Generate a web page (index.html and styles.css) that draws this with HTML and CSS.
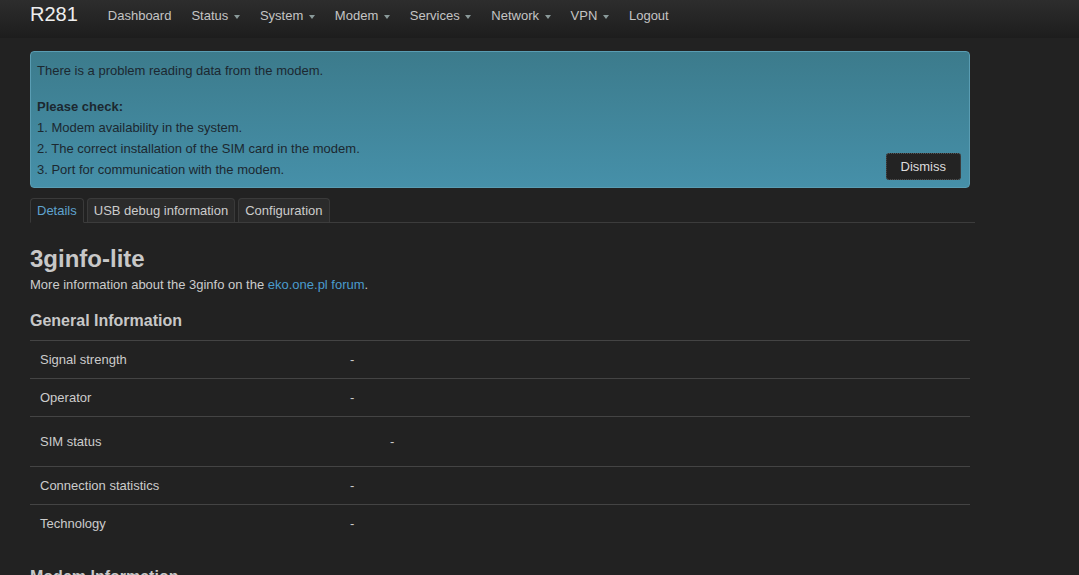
FILE: index.html
```html
<!DOCTYPE html>
<html lang="en">
<head>
    <meta charset="UTF-8">
    <title>R281 - 3ginfo-lite</title>
    <link rel="stylesheet" href="styles.css">
</head>
<body>
    <header class="navbar">
        <a class="brand" href="#">R281</a>
        <ul class="nav">
            <li><a href="#">Dashboard</a></li>
            <li><a href="#">Status <span class="caret"></span></a></li>
            <li><a href="#">System <span class="caret"></span></a></li>
            <li><a href="#">Modem <span class="caret"></span></a></li>
            <li><a href="#">Services <span class="caret"></span></a></li>
            <li><a href="#">Network <span class="caret"></span></a></li>
            <li><a href="#">VPN <span class="caret"></span></a></li>
            <li><a href="#">Logout</a></li>
        </ul>
    </header>

    <div class="container">
        <div class="alert">
            <div class="alert-text">
                <p class="alert-lead">There is a problem reading data from the modem.</p>
                <strong>Please check:</strong>
                <p>1. Modem availability in the system.</p>
                <p>2. The correct installation of the SIM card in the modem.</p>
                <p>3. Port for communication with the modem.</p>
            </div>
            <button class="btn">Dismiss</button>
        </div>

        <ul class="tabs">
            <li class="active"><a href="#">Details</a></li>
            <li><a href="#">USB debug information</a></li>
            <li><a href="#">Configuration</a></li>
        </ul>

        <h2>3ginfo-lite</h2>
        <p class="intro">More information about the 3ginfo on the <a href="#">eko.one.pl forum</a>.</p>

        <h3>General Information</h3>
        <table class="info-table">
            <tr><td class="label">Signal strength</td><td>-</td></tr>
            <tr><td class="label">Operator</td><td>-</td></tr>
            <tr class="tall"><td class="label">SIM status</td><td><span class="sim-value">-</span></td></tr>
            <tr><td class="label">Connection statistics</td><td>-</td></tr>
            <tr><td class="label">Technology</td><td>-</td></tr>
        </table>

        <h3 class="next-section">Modem Information</h3>
    </div>
</body>
</html>
```

FILE: styles.css
```css
body {
    margin: 0;
    background: #222222;
    color: #cccccc;
    font-family: "Liberation Sans", Arial, sans-serif;
    font-size: 13px;
}
a {
    text-decoration: none;
}
.navbar {
    display: flex;
    align-items: flex-start;
    height: 38px;
    padding-left: 30px;
    background: linear-gradient(#2d2d2d, #1d1d1d);
}
.brand {
    color: #eeeeee;
    font-size: 20px;
    line-height: 28px;
    margin-right: 20px;
}
.nav {
    display: flex;
    list-style: none;
    margin: 0;
    padding: 0;
}
.nav a {
    display: block;
    padding: 0 10px;
    line-height: 31px;
    color: #c4c4c4;
    font-size: 13px;
}
.caret {
    display: inline-block;
    width: 0;
    height: 0;
    margin-left: 2px;
    vertical-align: middle;
    border-top: 4px solid #8a9a9a;
    border-left: 3px solid transparent;
    border-right: 3px solid transparent;
}
.container {
    width: 945px;
    padding: 13px 0 0 30px;
}
.alert {
    display: flex;
    justify-content: space-between;
    align-items: flex-end;
    box-sizing: border-box;
    width: 940px;
    padding: 8px 8px 7px 6px;
    border: 1px solid #5a9db3;
    border-radius: 4px;
    background: linear-gradient(#3c7b8c, #4690a9);
    color: #1c2830;
    font-size: 13px;
    line-height: 21px;
}
.alert p {
    margin: 0;
}
.alert .alert-lead {
    margin-bottom: 15px;
}
.alert strong {
    display: block;
}
.btn {
    padding: 0 14px;
    height: 27px;
    border: 1px dotted #555555;
    border-radius: 3px;
    background: #232323;
    color: #dddddd;
    font-family: inherit;
    font-size: 13px;
}
.tabs {
    display: flex;
    gap: 3px;
    list-style: none;
    margin: 10px 0 0;
    padding: 0;
    border-bottom: 1px solid #3c3c3c;
}
.tabs li {
    margin-bottom: -1px;
}
.tabs a {
    display: block;
    padding: 0 6px;
    line-height: 23px;
    border: 1px solid #3a3a3a;
    border-bottom: none;
    border-radius: 4px 4px 0 0;
    background: #2b2b2b;
    color: #cccccc;
}
.tabs .active a {
    background: #222222;
    color: #5fa3cf;
    border-bottom: 1px solid #222222;
}
h2 {
    margin: 22px 0 0;
    font-size: 24px;
    line-height: 28px;
    color: #c8c8c8;
}
.intro {
    margin: 3px 0 0;
    font-size: 13px;
    line-height: 18px;
}
.intro a {
    color: #4a9ccd;
}
h3 {
    margin: 17px 0 0;
    font-size: 16px;
    line-height: 20px;
    color: #c8c8c8;
}
.info-table {
    width: 940px;
    margin-top: 9px;
    border-collapse: collapse;
}
.info-table td {
    height: 37px;
    padding: 0 10px;
    border-top: 1px solid #444444;
    font-size: 13px;
}
.info-table .label {
    width: 290px;
}
.info-table .tall td {
    height: 49px;
}
.sim-value {
    padding-left: 40px;
}
.next-section {
    margin-top: 25px;
}
```
